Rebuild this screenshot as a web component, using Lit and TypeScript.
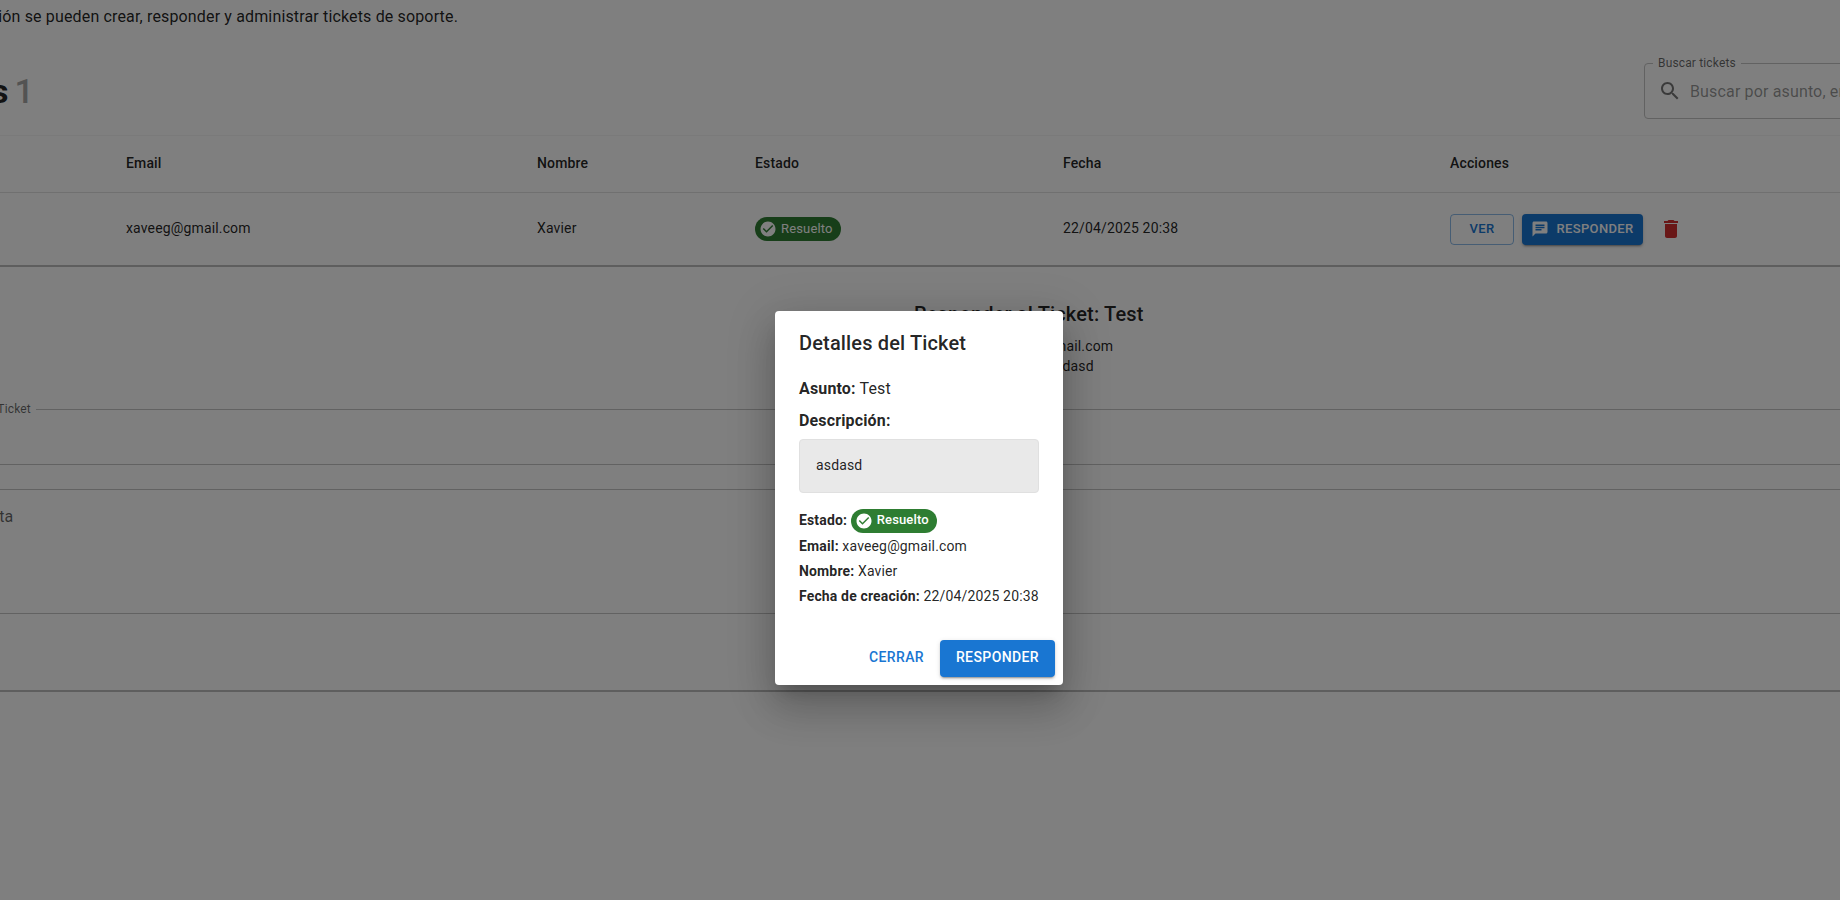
import { LitElement, html, css, svg } from 'lit';
import { customElement } from 'lit/decorators.js';

const checkIcon = svg`<path d="M12 2C6.48 2 2 6.48 2 12s4.48 10 10 10 10-4.48 10-10S17.52 2 12 2zM10 17l-5-5 1.41-1.41L10 14.17l7.59-7.59L19 8l-9 9z"/>`;
const chatIcon = svg`<path d="M20 2H4c-1.1 0-1.99.9-1.99 2L2 22l4-4h14c1.1 0 2-.9 2-2V4c0-1.1-.9-2-2-2zM6 9h12v2H6V9zm8 5H6v-2h8v2zm4-6H6V6h12v2z"/>`;
const deleteIcon = svg`<path d="M6 19c0 1.1.9 2 2 2h8c1.1 0 2-.9 2-2V7H6v12zM19 4h-3.5l-1-1h-5l-1 1H5v2h14V4z"/>`;
const searchIcon = svg`<path d="M15.5 14h-.79l-.28-.27C15.41 12.59 16 11.11 16 9.5 16 5.91 13.09 3 9.5 3S3 5.91 3 9.5 5.91 16 9.5 16c1.61 0 3.09-.59 4.23-1.57l.27.28v.79l5 4.99L20.49 19l-4.99-5zm-6 0C7.01 14 5 11.99 5 9.5S7.01 5 9.5 5 14 7.01 14 9.5 11.99 14 9.5 14z"/>`;

/**
 * Ticket admin page, scrolled sideways, with the details dialog open on top.
 */
@customElement('app-root')
export class AppRoot extends LitElement {
    static override styles = css`
        :host {
            display: block;
            height: 900px;
            overflow: hidden;
            position: relative;
            background: #fff;
            font-family: Roboto, "Liberation Sans", sans-serif;
            color: rgba(0, 0, 0, .87);
            letter-spacing: .00938em;
        }

        .page {
            width: 2284px;
            margin-left: -240px;
        }

        .intro {
            margin: 0;
            padding: 5px 0 0 0;
            height: 46px;
            box-sizing: border-box;
            font-size: 16px;
            line-height: 24px;
            text-align: right;
            width: 698px;
            white-space: nowrap;
        }

        .toolbar {
            display: flex;
            justify-content: space-between;
            align-items: flex-start;
            height: 89px;
            padding-top: 17px;
            box-sizing: border-box;
        }

        .page-title {
            margin: 0;
            width: 274px;
            text-align: right;
            font-size: 34px;
            line-height: 56px;
            font-weight: 700;
            letter-spacing: .00735em;
            word-spacing: -3px;
            white-space: nowrap;
        }

        .page-title span {
            color: #a6a6a6;
            font-weight: 500;
        }

        .field {
            position: relative;
            box-sizing: border-box;
            border: 1px solid #c4c4c4;
            border-radius: 4px;
        }

        .field label {
            position: absolute;
            top: -8px;
            left: 8px;
            padding: 0 5px;
            background: #fff;
            font-size: 12px;
            line-height: 14px;
            color: rgba(0, 0, 0, .6);
            white-space: nowrap;
        }

        .search {
            width: 400px;
            height: 56px;
            display: flex;
            align-items: center;
            gap: 8px;
            padding-left: 13px;
            font-size: 16px;
            color: rgba(0, 0, 0, .42);
        }

        .search svg {
            width: 24px;
            height: 24px;
            fill: rgba(0, 0, 0, .54);
            flex-shrink: 0;
        }

        .ticket-table {
            display: grid;
            grid-template-columns: 350px 411px 218px 308px 387px 1fr;
            border-top: 1px solid #f4f4f4;
            font-size: 14px;
            letter-spacing: .01071em;
        }

        .ticket-table > div {
            box-sizing: border-box;
            padding: 0 16px;
            display: flex;
            align-items: center;
        }

        .ticket-table > .head {
            height: 57px;
            padding-bottom: 2px;
            font-weight: 500;
            border-bottom: 1px solid #e0e0e0;
        }

        .cell {
            height: 74px;
            border-bottom: 2px solid #bdbdbd;
        }

        .ticket-table > .cell-text {
            padding-bottom: 2px;
        }

        .chip {
            display: inline-flex;
            align-items: center;
            height: 24px;
            box-sizing: border-box;
            padding: 0 8px 0 4px;
            gap: 4px;
            border-radius: 12px;
            background: #2e7d32;
            color: #fff;
            font-size: 13px;
        }

        .chip span {
            margin-bottom: 2px;
        }

        .chip svg {
            width: 18px;
            height: 18px;
            fill: #fff;
        }

        .actions {
            gap: 8px;
        }

        .btn {
            display: inline-flex;
            align-items: center;
            justify-content: center;
            box-sizing: border-box;
            height: 31px;
            border-radius: 4px;
            font-size: 13px;
            font-weight: 500;
            letter-spacing: .02857em;
            text-transform: uppercase;
        }

        .btn-ver {
            width: 64px;
            padding-bottom: 2px;
            border: 1px solid rgba(25, 118, 210, .5);
            color: #1976d2;
        }

        .btn-responder {
            width: 121px;
            gap: 7px;
            background: #1976d2;
            color: #fff;
            box-shadow: 0 3px 1px -2px rgba(0, 0, 0, .2), 0 2px 2px rgba(0, 0, 0, .14), 0 1px 5px rgba(0, 0, 0, .12);
        }

        .btn-responder span {
            margin-bottom: 2px;
        }

        .btn-responder svg {
            width: 18px;
            height: 18px;
            fill: #fff;
        }

        .trash {
            width: 24px;
            height: 24px;
            margin-left: 8px;
            fill: #d32f2f;
        }

        .reply {
            box-sizing: border-box;
            height: 425px;
            padding: 31px 164px 0 162px;
            border-bottom: 2px solid #bdbdbd;
        }

        .reply-head {
            margin-left: 992px;
        }

        .reply-head h3 {
            margin: 0 0 6px;
            font-size: 20px;
            line-height: 32px;
            font-weight: 500;
            letter-spacing: .0075em;
        }

        .reply-head p {
            margin: 0;
            font-size: 14px;
            line-height: 20px;
            letter-spacing: .01071em;
        }

        .subject {
            margin-top: 33px;
            height: 56px;
        }

        .answer {
            margin-top: 24px;
            height: 125px;
            padding: 15px 14px;
            font-size: 16px;
            line-height: 24px;
            color: rgba(0, 0, 0, .6);
        }

        .backdrop {
            position: absolute;
            inset: 0;
            background: rgba(0, 0, 0, .5);
        }

        .dialog {
            position: absolute;
            left: 775px;
            top: 311px;
            width: 288px;
            height: 374px;
            box-sizing: border-box;
            background: #fff;
            border-radius: 4px;
            box-shadow: 0 11px 15px -7px rgba(0, 0, 0, .2), 0 24px 38px 3px rgba(0, 0, 0, .14), 0 9px 46px 8px rgba(0, 0, 0, .12);
            display: flex;
            flex-direction: column;
        }

        .dialog h2 {
            margin: 0;
            padding: 16px 24px;
            font-size: 20px;
            line-height: 32px;
            font-weight: 500;
            letter-spacing: .0075em;
        }

        .dialog-body {
            padding: 2px 24px 0;
            flex: 1;
        }

        .dialog-body p {
            margin: 0 0 8px;
            font-size: 16px;
            line-height: 24px;
        }

        .dialog-body .description-label {
            margin: 0;
        }

        .dialog-body b {
            font-weight: 700;
        }

        .description {
            box-sizing: border-box;
            height: 54px;
            margin: 6px 0 15px;
            padding: 0 16px 2px;
            display: flex;
            align-items: center;
            background: #e9e9e9;
            border: 1px solid #e0e0e0;
            border-radius: 4px;
            font-size: 14px;
            letter-spacing: .01071em;
        }

        .dialog-body .meta {
            margin: 0;
            font-size: 14px;
            line-height: 25px;
            letter-spacing: .01071em;
            white-space: nowrap;
        }

        .dialog-body .meta-status {
            margin-bottom: 1px;
        }

        .dialog-body .meta .chip {
            font-weight: 500;
            vertical-align: middle;
        }

        .dialog-body .meta .chip span {
            margin-bottom: 3px;
        }

        .dialog-actions {
            display: flex;
            justify-content: flex-end;
            gap: 8px;
            padding: 8px;
        }

        .dialog-btn {
            height: 37px;
            padding-bottom: 3px;
            font-size: 14px;
        }

        .dialog-close {
            width: 71px;
            color: #1976d2;
        }

        .dialog-reply {
            width: 115px;
            background: #1976d2;
            color: #fff;
            box-shadow: 0 3px 1px -2px rgba(0, 0, 0, .2), 0 2px 2px rgba(0, 0, 0, .14), 0 1px 5px rgba(0, 0, 0, .12);
        }
    `;

    private renderChip() {
        return html`<span class="chip"><svg viewBox="0 0 24 24">${checkIcon}</svg><span>Resuelto</span></span>`;
    }

    override render() {
        return html`
            <div class="page">
                <p class="intro">En esta sección se pueden crear, responder y administrar tickets de soporte.</p>
                <div class="toolbar">
                    <h1 class="page-title">Tickets <span>1</span></h1>
                    <div class="field search">
                        <label>Buscar tickets</label>
                        <svg viewBox="0 0 24 24">${searchIcon}</svg>
                        <span>Buscar por asunto, email o nombre...</span>
                    </div>
                </div>
                <div class="ticket-table">
                    <div class="head">Asunto</div>
                    <div class="head">Email</div>
                    <div class="head">Nombre</div>
                    <div class="head">Estado</div>
                    <div class="head">Fecha</div>
                    <div class="head">Acciones</div>
                    <div class="cell cell-text">Test</div>
                    <div class="cell cell-text">xaveeg@gmail.com</div>
                    <div class="cell cell-text">Xavier</div>
                    <div class="cell">${this.renderChip()}</div>
                    <div class="cell cell-text">22/04/2025 20:38</div>
                    <div class="cell actions">
                        <span class="btn btn-ver">Ver</span>
                        <span class="btn btn-responder"><svg viewBox="0 0 24 24">${chatIcon}</svg><span>Responder</span></span>
                        <svg class="trash" viewBox="0 0 24 24">${deleteIcon}</svg>
                    </div>
                </div>
                <section class="reply">
                    <div class="reply-head">
                        <h3>Responder al Ticket: Test</h3>
                        <p>Solicitante: xaveeg@gmail.com</p>
                        <p>Descripción original: asdasd</p>
                    </div>
                    <div class="field subject"><label>Asunto del Ticket</label></div>
                    <div class="field answer">Respuesta</div>
                </section>
            </div>
            <div class="backdrop"></div>
            <div class="dialog">
                <h2>Detalles del Ticket</h2>
                <div class="dialog-body">
                    <p><b>Asunto:</b> Test</p>
                    <p class="description-label"><b>Descripción:</b></p>
                    <div class="description">asdasd</div>
                    <p class="meta meta-status"><b>Estado:</b> ${this.renderChip()}</p>
                    <p class="meta"><b>Email:</b> xaveeg@gmail.com</p>
                    <p class="meta"><b>Nombre:</b> Xavier</p>
                    <p class="meta"><b>Fecha de creación:</b> 22/04/2025 20:38</p>
                </div>
                <div class="dialog-actions">
                    <span class="btn dialog-btn dialog-close">Cerrar</span>
                    <span class="btn dialog-btn dialog-reply">Responder</span>
                </div>
            </div>
        `;
    }
}

declare global {
    interface HTMLElementTagNameMap {
        'app-root': AppRoot;
    }
}
